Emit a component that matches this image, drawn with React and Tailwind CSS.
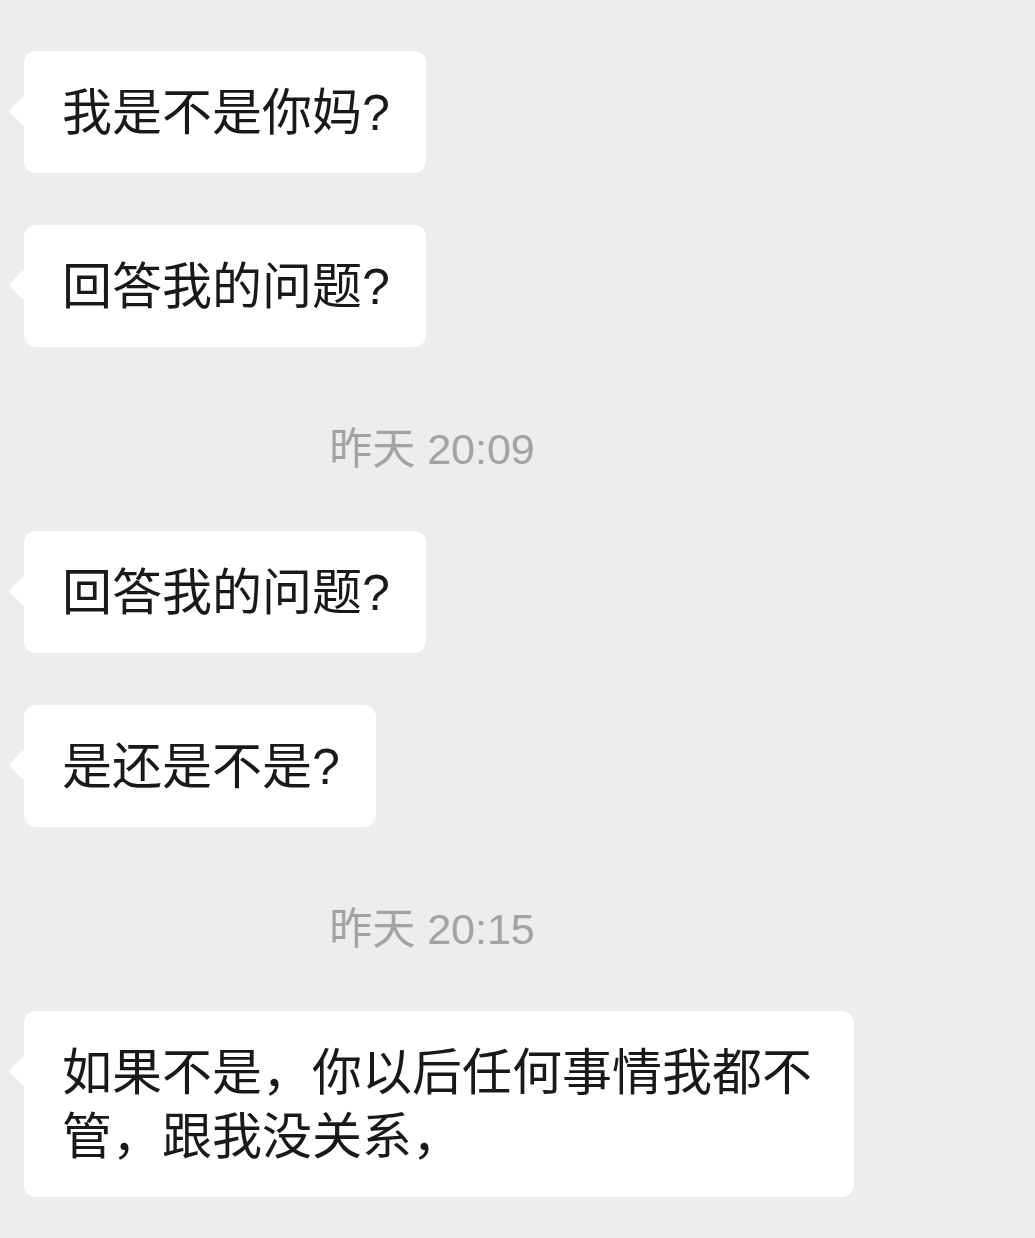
const FONT = {
  fontFamily:
    '"Liberation Sans", "PingFang SC", "Noto Sans CJK SC", sans-serif',
};

function Bubble({ children, className = "" }) {
  return (
    <div
      className={`relative w-fit max-w-[830px] rounded-[12px] bg-white pl-[38px] pr-[36px] pt-[30px] pb-[28px] text-[50px] leading-[64px] text-[#191919] ${className}`}
    >
      <span className="absolute left-[-11px] top-[49px] h-[22px] w-[22px] rotate-45 rounded-[3px] bg-white" />
      <p className="relative">{children}</p>
    </div>
  );
}

function Timestamp({ children }) {
  return (
    <div className="mt-[82px] mb-[62px] flex w-[816px] justify-center text-[43px] leading-[40px] text-[#a3a3a3]">
      {children}
    </div>
  );
}

export default function App() {
  return (
    <div
      className="flex min-h-[1238px] w-full flex-col bg-[#ededed] pl-[24px] pt-[51px]"
      style={FONT}
    >
      <Bubble>我是不是你妈?</Bubble>
      <Bubble className="mt-[52px]">回答我的问题?</Bubble>
      <Timestamp>昨天 20:09</Timestamp>
      <Bubble>回答我的问题?</Bubble>
      <Bubble className="mt-[52px]">是还是不是?</Bubble>
      <Timestamp>昨天 20:15</Timestamp>
      <Bubble>如果不是，你以后任何事情我都不管，跟我没关系，</Bubble>
    </div>
  );
}
